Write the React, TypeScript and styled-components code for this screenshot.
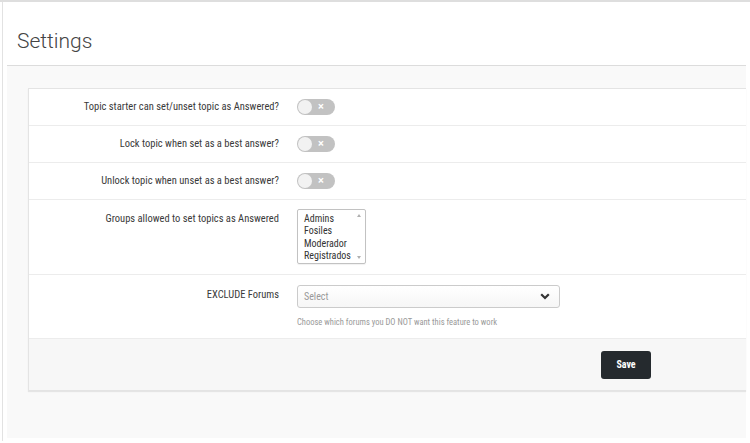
import React from 'react'
import styled, { createGlobalStyle } from 'styled-components'

const GlobalStyle = createGlobalStyle`
  html, body {
    margin: 0;
    padding: 0;
    background: #fff;
  }
  body {
    font-family: Roboto, 'Liberation Sans', sans-serif;
    color: #333;
  }
`

const Frame = styled.div`
  border-top: 2px solid #dedede;
  padding: 0 4px 0 2px;
  height: 441px;
  box-sizing: border-box;
`

const Card = styled.div`
  border-left: 1px solid #e2e2e2;
  height: 100%;
  padding-top: 1px;
  box-sizing: border-box;
`

const Header = styled.div`
  margin-left: 4px;
  height: 63px;
  border-bottom: 1px solid #dcdcdc;
  display: flex;
  align-items: flex-end;
  padding: 0 0 12px 10px;
  box-sizing: border-box;
`

const Title = styled.h1`
  margin: 0;
  font-size: 21px;
  line-height: 24px;
  font-weight: 300;
  color: #444;
`

const Body = styled.div`
  margin-left: 4px;
  background: #f9f9f9;
  padding: 22px 0 47px 21px;
`

const Panel = styled.div`
  background: #fff;
  border: 1px solid #e4e4e4;
  border-right: none;
  box-shadow: 0 1px 1px rgba(0, 0, 0, 0.08);
`

const Row = styled.div<{ $pad?: string }>`
  display: grid;
  grid-template-columns: 250px 1fr;
  column-gap: 18px;
  padding: ${p => p.$pad ?? '10px 0'};
  border-bottom: 1px solid #ececec;
  align-items: start;
`

const Label = styled.div<{ $top?: number }>`
  text-align: right;
  font-size: 10.5px;
  font-stretch: 80%;
  line-height: 16px;
  color: #3a3a3a;
  padding-top: ${p => p.$top ?? 0}px;
`

const Toggle = styled.div`
  position: relative;
  width: 38px;
  height: 16px;
  border-radius: 8px;
  background: #c2c2c2;
`

const Knob = styled.span`
  position: absolute;
  left: 1px;
  top: 1px;
  width: 14px;
  height: 14px;
  border-radius: 50%;
  background: #f2f2f2;
`

const Cross = styled.span`
  position: absolute;
  left: 21px;
  top: 0;
  line-height: 16px;
  font-size: 11px;
  font-weight: 700;
  color: #fff;
`

const ListBox = styled.div`
  display: flex;
  width: 67px;
  height: 53px;
  border: 1px solid #c2c2c2;
  border-radius: 2px;
  box-shadow: 0 1px 1px rgba(0, 0, 0, 0.06);
`

const Options = styled.div`
  flex: 1;
  padding: 3px 0 0 6px;
  font-size: 10px;
  font-stretch: 80%;
  line-height: 12.3px;
  color: #333;
`

const Scroll = styled.div`
  width: 12px;
  display: flex;
  flex-direction: column;
  justify-content: space-between;
  align-items: center;
  padding: 4px 0 4px;
`

const Arrow = styled.span<{ $down?: boolean }>`
  width: 0;
  height: 0;
  border-left: 2.5px solid transparent;
  border-right: 2.5px solid transparent;
  ${p =>
    p.$down
      ? 'border-top: 3px solid #b0b0b0;'
      : 'border-bottom: 3px solid #b0b0b0;'}
`

const Control = styled.div`
  display: flex;
  flex-direction: column;
`

const SelectBox = styled.div`
  box-sizing: border-box;
  height: 23px;
  width: 263px;
  border: 1px solid #cbcbcb;
  border-radius: 3px;
  background: linear-gradient(#fff, #f6f6f6);
  display: flex;
  align-items: center;
  justify-content: space-between;
  padding: 0 9px 0 6px;
`

const Placeholder = styled.span`
  font-size: 10px;
  font-stretch: 80%;
  color: #999;
`

const Help = styled.div`
  margin-top: 9px;
  font-size: 8.5px;
  font-stretch: 80%;
  color: #999;
`

const Footer = styled.div`
  background: #f7f7f7;
  height: 51px;
  display: flex;
  align-items: center;
  padding-left: 572px;
`

const SaveButton = styled.button`
  width: 50px;
  height: 28px;
  border: none;
  border-radius: 3px;
  background: #252a2e;
  color: #fff;
  font-family: Roboto, 'Liberation Sans', sans-serif;
  font-size: 10px;
  font-stretch: 80%;
  font-weight: 700;
  padding: 0;
`

const Switch: React.FC = () => (
  <Toggle>
    <Knob />
    <Cross>×</Cross>
  </Toggle>
)

const toggles = [
  'Topic starter can set/unset topic as Answered?',
  'Lock topic when set as a best answer?',
  'Unlock topic when unset as a best answer?',
]

const groups = ['Admins', 'Fosiles', 'Moderador', 'Registrados']

export default function App() {
  return (
    <>
      <GlobalStyle />
      <Frame>
        <Card>
          <Header>
            <Title>Settings</Title>
          </Header>
          <Body>
            <Panel>
              {toggles.map(t => (
                <Row key={t}>
                  <Label>{t}</Label>
                  <Switch />
                </Row>
              ))}
              <Row $pad="9px 0 10px">
                <Label $top={2}>Groups allowed to set topics as Answered</Label>
                <ListBox>
                  <Options>
                    {groups.map(g => (
                      <div key={g}>{g}</div>
                    ))}
                  </Options>
                  <Scroll>
                    <Arrow />
                    <Arrow $down />
                  </Scroll>
                </ListBox>
              </Row>
              <Row $pad="10px 0 11px">
                <Label $top={2}>EXCLUDE Forums</Label>
                <Control>
                  <SelectBox>
                    <Placeholder>Select</Placeholder>
                    <svg width="10" height="7" viewBox="0 0 10 7">
                      <path d="M1.2 1.2 L5 5 L8.8 1.2" fill="none" stroke="#333" strokeWidth="2.2" />
                    </svg>
                  </SelectBox>
                  <Help>Choose which forums you DO NOT want this feature to work</Help>
                </Control>
              </Row>
              <Footer>
                <SaveButton>Save</SaveButton>
              </Footer>
            </Panel>
          </Body>
        </Card>
      </Frame>
    </>
  )
}
